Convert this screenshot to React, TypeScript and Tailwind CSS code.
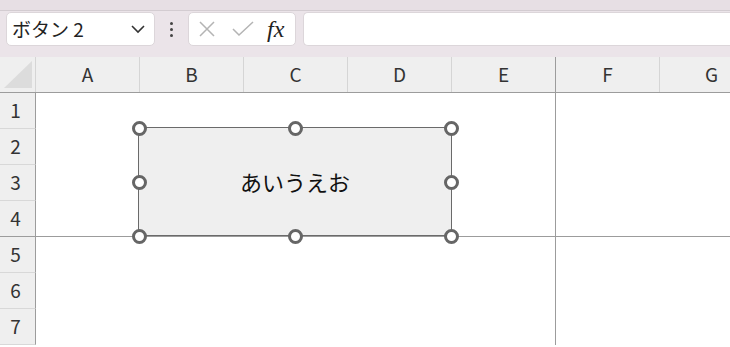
import React from "react";

const COLS = ["A", "B", "C", "D", "E", "F", "G"];
const ROWS = [1, 2, 3, 4, 5, 6, 7];
const FONT = { fontFamily: '"Noto Sans CJK JP", "Noto Sans", sans-serif' };

function Handle({ x, y }: { x: number; y: number }) {
  return (
    <span
      className="absolute h-[15px] w-[15px] rounded-full border-[3px] border-[#666] bg-white"
      style={{ left: x - 7.5, top: y - 7.5 }}
    />
  );
}

function FormulaBar() {
  return (
    <div className="flex h-[46px] items-start bg-[#ebe4e9] pt-[1px]">
      <div className="ml-[6px] flex h-[34px] w-[149px] items-center justify-between rounded-[5px] border border-[#dcd6da] bg-white pl-[5px] pr-[8px]">
        <span className="text-[19px] text-[#222]">ボタン&nbsp;2</span>
        <svg width="16" height="10" viewBox="0 0 16 10" fill="none">
          <path d="M2 2l6 6 6-6" stroke="#333" strokeWidth="1.6" />
        </svg>
      </div>
      <div className="flex h-[34px] w-[33px] flex-col items-center justify-center gap-[3px]">
        <span className="h-[3px] w-[3px] rounded-full bg-[#444]" />
        <span className="h-[3px] w-[3px] rounded-full bg-[#444]" />
        <span className="h-[3px] w-[3px] rounded-full bg-[#444]" />
      </div>
      <div className="flex h-[34px] w-[108px] items-center rounded-[5px] border border-[#dcd6da] bg-white">
        <svg className="ml-[9px]" width="18" height="18" viewBox="0 0 18 18" fill="none">
          <path d="M2 2l14 14M16 2L2 16" stroke="#b4b4b4" strokeWidth="1.5" />
        </svg>
        <svg className="ml-[16px]" width="22" height="16" viewBox="0 0 22 16" fill="none">
          <path d="M1 8l6 6L21 1" stroke="#b4b4b4" strokeWidth="1.5" />
        </svg>
        <span
          className="ml-[13px] text-[24px] italic leading-none text-[#222]"
          style={{ fontFamily: '"Liberation Serif", "DejaVu Serif", serif' }}
        >
          fx
        </span>
      </div>
      <div className="ml-[7px] h-[34px] flex-1 rounded-l-[5px] border border-r-0 border-[#dcd6da] bg-white" />
    </div>
  );
}

export default function App() {
  return (
    <div className="relative h-[347px] w-[730px] overflow-hidden bg-white" style={FONT}>
      <div className="h-[11px] border-b border-[#d3ccd1] bg-[#e7dfe4]" />
      <FormulaBar />

      {/* column headers */}
      <div className="flex h-[36px] border-b border-[#9c9c9c] bg-[#efefef]">
        <div className="relative w-[36px] shrink-0 border-r border-[#d5d5d5]">
          <svg className="absolute left-[4px] top-[4px]" width="28" height="27" viewBox="0 0 28 27">
            <path d="M28 0V27H0Z" fill="#dcdcdc" />
          </svg>
        </div>
        {COLS.map((c, i) => (
          <div
            key={c}
            className={`flex w-[104px] shrink-0 items-center justify-center text-[19px] text-[#333] ${
              i === 4 ? "border-r border-[#9c9c9c]" : "border-r border-[#d5d5d5]"
            }`}
          >
            {c}
          </div>
        ))}
      </div>

      {/* rows */}
      {ROWS.map((r) => (
        <div
          key={r}
          className={`flex h-[36px] ${r === 4 ? "border-b border-[#9c9c9c]" : ""}`}
        >
          <div
            className={`flex w-[36px] shrink-0 items-center justify-center border-r border-[#9c9c9c] bg-[#efefef] pr-[4px] text-[19px] text-[#333] ${
              r === 4 ? "" : "border-b border-b-[#d8d8d8]"
            }`}
          >
            {r}
          </div>
          <div className="w-[520px] shrink-0 border-r border-[#9c9c9c]" />
          <div className="flex-1" />
        </div>
      ))}

      {/* selected button shape */}
      <div className="absolute left-[138px] top-[127px] flex h-[109px] w-[314px] items-center justify-center border-[1.5px] border-[#6a6a6a] bg-[#efefef]">
        <span className="text-[22px] text-[#111]">あいうえお</span>
      </div>
      <Handle x={139} y={128} />
      <Handle x={295} y={128} />
      <Handle x={451} y={128} />
      <Handle x={139} y={182} />
      <Handle x={451} y={182} />
      <Handle x={139} y={236} />
      <Handle x={295} y={236} />
      <Handle x={451} y={236} />
    </div>
  );
}
